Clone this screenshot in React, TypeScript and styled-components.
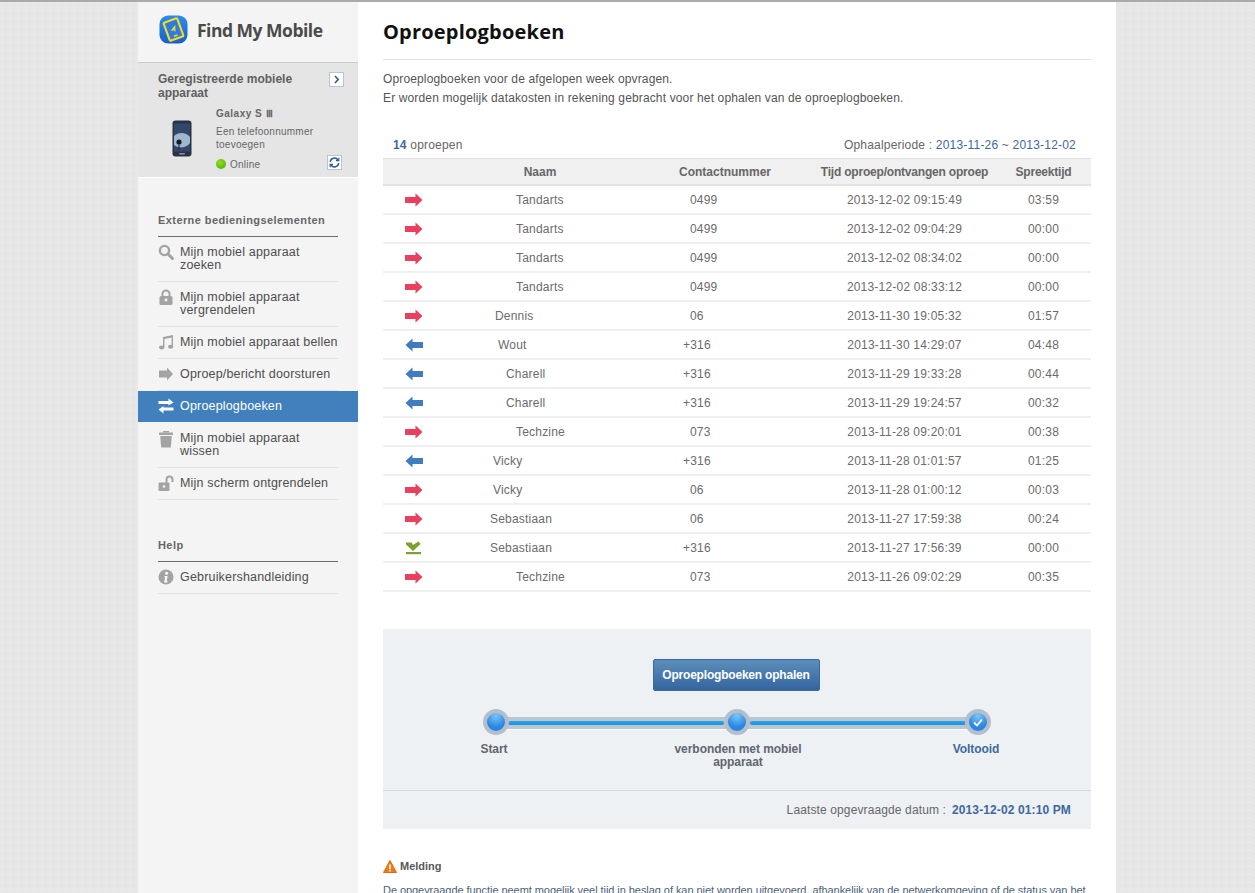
import React from "react";
import styled, { createGlobalStyle } from "styled-components";

const Global = createGlobalStyle`
  html, body { margin: 0; padding: 0; height: 100%; overflow: hidden; }
  body {
    font-family: "Liberation Sans", Arial, sans-serif;
    color: #555;
    background-color: #e7e7e7;
    background-image:
      radial-gradient(circle at 2px 2px, #ececec 1.2px, transparent 1.6px),
      radial-gradient(circle at 6px 6px, #e3e3e3 1.2px, transparent 1.6px);
    background-size: 8px 8px;
  }
  #root { height: 100%; }
`;

const Page = styled.div`
  height: 100%;
  border-top: 2px solid #aaaaaa;
  box-sizing: border-box;
`;
const Wrapper = styled.div`
  width: 978px;
  margin-left: 138px;
  display: flex;
  min-height: 1100px;
`;
const Sidebar = styled.aside`
  width: 220px;
  flex: none;
  background: #f4f4f4;
`;
const LogoBar = styled.div`
  display: flex;
  align-items: flex-start;
  gap: 9px;
  padding: 13px 0 0 21px;
  box-sizing: border-box;
  border-bottom: 1px solid #c8ccd0;
  height: 61px;
`;
const LogoText = styled.div`
  font-family: "Open Sans", sans-serif;
  font-weight: 700;
  font-size: 17.5px;
  line-height: 30px;
  color: #4a4a4a;
  letter-spacing: -0.5px;
`;
const DevicePanel = styled.section`
  height: 115px;
  box-sizing: border-box;
  background: #e5e5e5;
  padding: 9px 14px 0 20px;
  border-bottom: 1px solid #fff;
`;
const DeviceHead = styled.div`
  display: flex;
  justify-content: space-between;
  align-items: flex-start;
`;
const DeviceTitle = styled.h2`
  margin: 0;
  font-size: 12px;
  line-height: 14px;
  font-weight: 700;
  color: #5f5f5f;
  width: 160px;
`;
const SquareBtn = styled.span`
  width: 13px;
  height: 13px;
  background: #fff;
  border: 1px solid #b9c4cf;
  display: flex;
  align-items: center;
  justify-content: center;
  flex: none;
`;
const DeviceBody = styled.div`
  display: flex;
  margin-top: 7px;
`;
const PhoneSlot = styled.div`
  width: 58px;
  flex: none;
  padding: 13px 0 0 14px;
  box-sizing: border-box;
`;
const DeviceInfo = styled.div`
  flex: 1;
  font-size: 10px;
  color: #666;
  line-height: 13px;
  letter-spacing: 0.25px;
`;
const DeviceName = styled.div`
  font-weight: 700;
  font-size: 10px;
  line-height: 14px;
  color: #666;
  margin-bottom: 4px;
  letter-spacing: 0.5px;
`;
const StatusRow = styled.div`
  display: flex;
  align-items: center;
  margin-top: 6px;
  height: 14px;
  gap: 4px;
`;
const Dot = styled.span`
  width: 10px;
  height: 10px;
  border-radius: 50%;
  background: radial-gradient(circle at 40% 35%, #8fe020, #46a800);
`;
const RefreshSlot = styled.span`
  margin-left: auto;
  margin-right: 2px;
  margin-top: -3px;
`;
const NavSection = styled.nav<{ $top: number }>`
  padding: ${(p) => p.$top}px 20px 0 20px;
`;
const NavHeading = styled.h3`
  margin: 0;
  font-size: 11px;
  line-height: 13px;
  font-weight: 700;
  color: #666;
  letter-spacing: 0.42px;
  padding-bottom: 9px;
  border-bottom: 1px solid #6e6e6e;
`;
const NavList = styled.ul`
  list-style: none;
  margin: 0 -20px;
  padding: 0;
`;
const NavItem = styled.li<{ $active?: boolean; $h: number; $pad?: number }>`
  height: ${(p) => p.$h}px;
  box-sizing: border-box;
  display: flex;
  gap: 6px;
  padding: ${(p) => p.$pad ?? 9}px 20px 0;
  font-size: 12.5px;
  line-height: 13px;
  letter-spacing: 0.18px;
  color: ${(p) => (p.$active ? "#fff" : "#4e4e4e")};
  background: ${(p) => (p.$active ? "#4180bd" : "transparent")};
  position: relative;
  &::after {
    content: "";
    position: absolute;
    left: 20px;
    right: 20px;
    bottom: 0;
    height: 1px;
    background: ${(p) => (p.$active ? "transparent" : "#e0e2e5")};
  }
`;
const NavIcon = styled.span`
  width: 16px;
  height: 16px;
  flex: none;
  margin-top: -2px;
`;
const Main = styled.main`
  flex: 1;
  background: #fff;
  padding: 0 25px;
`;
const Title = styled.h1`
  margin: 0;
  height: 58px;
  box-sizing: border-box;
  padding-top: 16px;
  font-family: "Open Sans", sans-serif;
  font-size: 20px;
  line-height: 27px;
  font-weight: 700;
  color: #111;
  letter-spacing: 0.2px;
  border-bottom: 1px solid #e0e0e0;
`;
const Intro = styled.p`
  margin: 10px 0 0;
  font-size: 12px;
  line-height: 19px;
  letter-spacing: 0.14px;
  color: #555;
`;
const SummaryRow = styled.div`
  display: flex;
  justify-content: space-between;
  margin-top: 23px;
  padding: 0 15px 0 10px;
  font-size: 12px;
  letter-spacing: 0.2px;
  line-height: 29px;
  height: 27px;
  color: #666;
`;
const Count = styled.b`
  color: #3f68a0;
`;
const Period = styled.span`
  color: #3f68a0;
`;
const CallTable = styled.table`
  width: 708px;
  border-collapse: separate;
  border-spacing: 0;
  table-layout: fixed;
  font-size: 12px;
`;
const HeadCell = styled.th<{ $tight?: boolean }>`
  height: 25px;
  background: #f0f0f0;
  border-top: 1px solid #e2e2e2;
  border-bottom: 2px solid #e2e2e2;
  font-weight: 700;
  color: #666;
  text-align: center;
  padding: 0;
  letter-spacing: ${(p) => (p.$tight ? "-0.2px" : "0")};
`;
const BodyCell = styled.td`
  height: 27px;
  border-bottom: 2px solid #efefef;
  color: #6b6b6b;
  letter-spacing: 0.2px;
`;
const IconCell = styled(BodyCell)`
  padding: 0 0 0 22px;
  line-height: 0;
`;
const OffsetCell = styled(BodyCell)<{ $x: number }>`
  padding: 0 0 0 ${(p) => p.$x}px;
  white-space: nowrap;
`;
const CenterCell = styled(BodyCell)`
  text-align: center;
  padding: 0;
`;
const Panel = styled.section`
  margin-top: 37px;
  height: 200px;
  background: #eef1f4;
  display: flex;
  flex-direction: column;
`;
const PanelTop = styled.div`
  flex: none;
  height: 162px;
  box-sizing: border-box;
  padding: 30px 2px 0 0;
  border-bottom: 1px solid #d5dade;
  display: flex;
  flex-direction: column;
  align-items: center;
`;
const PrimaryButton = styled.button`
  width: 167px;
  height: 32px;
  padding: 0;
  border: 1px solid #3a6a9e;
  border-radius: 2px;
  background: linear-gradient(#5b8dbb, #34659f);
  color: #fff;
  font: 700 12px "Liberation Sans", Arial, sans-serif;
  letter-spacing: -0.2px;
`;
const Steps = styled.div`
  position: relative;
  width: 560px;
  margin-top: 18px;
  height: 60px;
`;
const Track = styled.div`
  position: absolute;
  left: 40px;
  top: 8px;
  height: 12px;
  padding: 0 12px;
  width: 458px;
  background: #b9c6d4;
  border-bottom: 1px solid #fff;
  display: flex;
  align-items: center;
  gap: 26px;
`;
const TrackFill = styled.div`
  flex: 1;
  height: 4px;
  border-radius: 2px;
  background: linear-gradient(#2ca4e4, #1e93da);
`;
const Step = styled.div<{ $left: number }>`
  position: absolute;
  left: ${(p) => p.$left}px;
  top: 0;
  width: 140px;
  margin-left: -70px;
  display: flex;
  flex-direction: column;
  align-items: center;
`;
const Knob = styled.div`
  width: 26px;
  height: 26px;
  box-sizing: border-box;
  border-radius: 50%;
  border: 4px solid #b3bfcc;
  background: radial-gradient(circle at 50% 15%, #7cc6f7, #2a86e2 65%);
  display: flex;
  align-items: center;
  justify-content: center;
  position: relative;
`;
const StepLabel = styled.div<{ $done?: boolean; $x?: number }>`
  margin-top: 8px;
  text-align: center;
  font-size: 12px;
  line-height: 13px;
  font-weight: 700;
  letter-spacing: -0.05px;
  color: ${(p) => (p.$done ? "#3f68a0" : "#5f6670")};
  transform: translateX(${(p) => p.$x ?? 0}px);
`;
const PanelFoot = styled.div`
  flex: 1;
  display: flex;
  justify-content: flex-end;
  align-items: center;
  padding-right: 20px;
  gap: 6px;
  font-size: 12px;
  letter-spacing: 0.12px;
  color: #666;
`;
const FootDate = styled.b`
  color: #3f68a0;
`;
const NoticeTitle = styled.h4`
  margin: 30px 0 0;
  display: flex;
  align-items: center;
  gap: 3px;
  font-size: 11px;
  line-height: 15px;
  font-weight: 700;
  color: #595959;
`;
const NoticeText = styled.p`
  margin: 9px 0 0;
  font-size: 11px;
  line-height: 14px;
  letter-spacing: -0.06px;
  color: #4b5f7a;
  white-space: nowrap;
`;

const Gray = "#a3a3a3";

const LogoIcon = () => (
  <svg width="29" height="29" viewBox="0 0 30 30">
    <defs>
      <linearGradient id="lg" x1="0" y1="0" x2="0" y2="1">
        <stop offset="0" stopColor="#2a8cf0" />
        <stop offset="1" stopColor="#1a5fc8" />
      </linearGradient>
    </defs>
    <rect x="0.5" y="0.5" width="29" height="29" rx="9" fill="url(#lg)" />
    <g transform="rotate(-20 15 15)">
      <rect x="7.5" y="5" width="15" height="20" rx="1.5" fill="#2f7be0" stroke="#f5dc22" strokeWidth="2.2" />
      <path d="M11.5 15.5l7-4.5-2.5 7-1-2.2z" fill="#f5dc22" />
      <rect x="13" y="21" width="4" height="1.6" fill="#f5dc22" />
    </g>
  </svg>
);

const PhoneIcon = () => (
  <svg width="20" height="37" viewBox="0 0 20 37">
    <rect x="0.5" y="0.5" width="19" height="36" rx="3" fill="#2a3346" />
    <rect x="2" y="3.5" width="16" height="28" fill="#33476a" />
    <path d="M2 16c4-4 12-4 16 1v6c-3 5-12 6-16 2z" fill="#9fb6cf" />
    <circle cx="7" cy="22" r="2.6" fill="#121a28" />
    <path d="M7 24.5v5" stroke="#121a28" strokeWidth="1" />
    <rect x="7" y="33" width="6" height="1.5" rx="0.7" fill="#8b93a3" />
  </svg>
);

const Chevron = () => (
  <svg width="9" height="9" viewBox="0 0 9 9">
    <path d="M3 1l3.2 3.5L3 8" fill="none" stroke="#2b5c95" strokeWidth="1.6" />
  </svg>
);

const Refresh = () => (
  <svg width="11" height="11" viewBox="0 0 11 11" fill="none" stroke="#2b5c95" strokeWidth="1.5">
    <path d="M1.3 5A4.2 4.2 0 0 1 9 3" />
    <path d="M9.7 6A4.2 4.2 0 0 1 2 8" />
    <path d="M9.8 0.8V3.6H7" strokeWidth="1.2" />
    <path d="M1.2 10.2V7.4H4" strokeWidth="1.2" />
  </svg>
);

const SearchI = () => (
  <svg width="16" height="16" viewBox="0 0 16 16" fill="none" stroke={Gray} strokeWidth="2.4">
    <circle cx="6.5" cy="6.5" r="4.6" />
    <path d="M10 10l4.5 4.5" strokeLinecap="round" strokeWidth="3" />
  </svg>
);
const LockI = () => (
  <svg width="16" height="16" viewBox="0 0 16 16">
    <path d="M4.5 8V5a3.5 3.5 0 0 1 7 0v3" fill="none" stroke={Gray} strokeWidth="2" />
    <rect x="1.5" y="7" width="13" height="9" rx="1.5" fill={Gray} />
    <circle cx="8" cy="11" r="1.4" fill="#f4f4f4" />
  </svg>
);
const MusicI = () => (
  <svg width="16" height="16" viewBox="0 0 16 16" fill={Gray}>
    <path d="M5 3l10-2v2.3L6.4 5V14H5zM13.6 3h1.4v10h-1.4z" />
    <ellipse cx="3.6" cy="13.6" rx="2.6" ry="2" />
    <ellipse cx="12.6" cy="12.8" rx="2.6" ry="2" />
  </svg>
);
const ForwardI = () => (
  <svg width="16" height="16" viewBox="0 0 16 16" fill={Gray}>
    <path d="M1 4.5h8V1.5L15 8l-6 6.5V11.5H1z" />
  </svg>
);
const SwapI = () => (
  <svg width="16" height="16" viewBox="0 0 16 16" fill="#fff">
    <path d="M0.5 3h10V0.5L15.5 4.5 10.5 7.5V6H0.5z" />
    <path d="M15.5 9.5h-10V8L0.5 11.5l5 4V12.5h10z" />
  </svg>
);
const TrashI = () => (
  <svg width="16" height="18" viewBox="0 0 16 18" fill={Gray}>
    <path d="M1 2.5h14V5H1z" />
    <path d="M5 1h6v1.5H5z" />
    <path d="M2.2 6h11.6l-1 11.5H3.2z" />
  </svg>
);
const UnlockI = () => (
  <svg width="16" height="16" viewBox="0 0 16 16">
    <path d="M8.5 8V4.5a3 3 0 0 1 6 0V7" fill="none" stroke={Gray} strokeWidth="2" />
    <rect x="0.5" y="7.5" width="11" height="8.5" rx="1.2" fill={Gray} />
    <circle cx="6" cy="11.5" r="1.3" fill="#f4f4f4" />
  </svg>
);
const InfoI = () => (
  <svg width="16" height="16" viewBox="0 0 16 16">
    <circle cx="8" cy="8" r="7.5" fill={Gray} />
    <circle cx="8.6" cy="4.3" r="1.5" fill="#fff" />
    <path d="M6.6 7h3l-1 5.2h1L9.4 13.4H6.2l1-5.2h-.8z" fill="#fff" />
  </svg>
);

type CallKind = "out" | "in" | "ok";

const OutArrow = () => (
  <svg width="18" height="14" viewBox="0 0 18 14" fill="#e9405f">
    <path d="M0 4h10.5V0.5L17.5 7l-7 6.5V10H0z" />
  </svg>
);
const InArrow = () => (
  <svg width="18" height="14" viewBox="0 0 18 14" fill="#3f7dc0">
    <path d="M18 4H7.5V0.5L0.5 7l7 6.5V10H18z" />
  </svg>
);
const OkArrow = () => (
  <svg width="18" height="14" viewBox="0 0 18 14">
    <path d="M1 1.5h5.5L8 4l5.5-3.5 2 2.5L8 10 1 3.5z" fill="#7ea02d" />
    <rect x="1" y="11" width="15" height="2.2" fill="#7ea02d" />
  </svg>
);

const calls: { k: CallKind; name: string; nx: number; num: string; nux: number; t: string; d: string }[] = [
  { k: "out", name: "Tandarts", nx: 73, num: "0499", nux: 53, t: "2013-12-02 09:15:49", d: "03:59" },
  { k: "out", name: "Tandarts", nx: 73, num: "0499", nux: 53, t: "2013-12-02 09:04:29", d: "00:00" },
  { k: "out", name: "Tandarts", nx: 73, num: "0499", nux: 53, t: "2013-12-02 08:34:02", d: "00:00" },
  { k: "out", name: "Tandarts", nx: 73, num: "0499", nux: 53, t: "2013-12-02 08:33:12", d: "00:00" },
  { k: "out", name: "Dennis", nx: 52, num: "06", nux: 53, t: "2013-11-30 19:05:32", d: "01:57" },
  { k: "in", name: "Wout", nx: 55, num: "+316", nux: 46, t: "2013-11-30 14:29:07", d: "04:48" },
  { k: "in", name: "Charell", nx: 63, num: "+316", nux: 46, t: "2013-11-29 19:33:28", d: "00:44" },
  { k: "in", name: "Charell", nx: 63, num: "+316", nux: 46, t: "2013-11-29 19:24:57", d: "00:32" },
  { k: "out", name: "Techzine", nx: 73, num: "073", nux: 53, t: "2013-11-28 09:20:01", d: "00:38" },
  { k: "in", name: "Vicky", nx: 50, num: "+316", nux: 46, t: "2013-11-28 01:01:57", d: "01:25" },
  { k: "out", name: "Vicky", nx: 50, num: "06", nux: 53, t: "2013-11-28 01:00:12", d: "00:03" },
  { k: "out", name: "Sebastiaan", nx: 47, num: "06", nux: 53, t: "2013-11-27 17:59:38", d: "00:24" },
  { k: "ok", name: "Sebastiaan", nx: 47, num: "+316", nux: 46, t: "2013-11-27 17:56:39", d: "00:00" },
  { k: "out", name: "Techzine", nx: 73, num: "073", nux: 53, t: "2013-11-26 09:02:29", d: "00:35" },
];

const kindIcon = { out: <OutArrow />, in: <InArrow />, ok: <OkArrow /> };

export default function App() {
  return (
    <Page>
      <Global />
      <Wrapper>
        <Sidebar>
          <LogoBar>
            <LogoIcon />
            <LogoText>Find My Mobile</LogoText>
          </LogoBar>
          <DevicePanel>
            <DeviceHead>
              <DeviceTitle>Geregistreerde mobiele apparaat</DeviceTitle>
              <SquareBtn><Chevron /></SquareBtn>
            </DeviceHead>
            <DeviceBody>
              <PhoneSlot><PhoneIcon /></PhoneSlot>
              <DeviceInfo>
                <DeviceName>Galaxy S Ⅲ</DeviceName>
                Een telefoonnummer
                <br />
                toevoegen
                <StatusRow>
                  <Dot />
                  Online
                  <RefreshSlot>
                    <SquareBtn><Refresh /></SquareBtn>
                  </RefreshSlot>
                </StatusRow>
              </DeviceInfo>
            </DeviceBody>
          </DevicePanel>
          <NavSection $top={36}>
            <NavHeading>Externe bedieningselementen</NavHeading>
            <NavList>
              <NavItem $h={45}><NavIcon><SearchI /></NavIcon><span>Mijn mobiel apparaat<br />zoeken</span></NavItem>
              <NavItem $h={45}><NavIcon><LockI /></NavIcon><span>Mijn mobiel apparaat<br />vergrendelen</span></NavItem>
              <NavItem $h={32}><NavIcon><MusicI /></NavIcon><span>Mijn mobiel apparaat bellen</span></NavItem>
              <NavItem $h={32}><NavIcon><ForwardI /></NavIcon><span>Oproep/bericht doorsturen</span></NavItem>
              <NavItem $h={31} $active><NavIcon><SwapI /></NavIcon><span>Oproeplogboeken</span></NavItem>
              <NavItem $h={46} $pad={10}><NavIcon><TrashI /></NavIcon><span>Mijn mobiel apparaat<br />wissen</span></NavItem>
              <NavItem $h={32}><NavIcon><UnlockI /></NavIcon><span>Mijn scherm ontgrendelen</span></NavItem>
            </NavList>
          </NavSection>
          <NavSection $top={39}>
            <NavHeading>Help</NavHeading>
            <NavList>
              <NavItem $h={32}><NavIcon><InfoI /></NavIcon><span>Gebruikershandleiding</span></NavItem>
            </NavList>
          </NavSection>
        </Sidebar>
        <Main>
          <Title>Oproeplogboeken</Title>
          <Intro>
            Oproeplogboeken voor de afgelopen week opvragen.
            <br />
            Er worden mogelijk datakosten in rekening gebracht voor het ophalen van de oproeplogboeken.
          </Intro>
          <SummaryRow>
            <span><Count>14</Count> oproepen</span>
            <span>Ophaalperiode : <Period>2013-11-26 ~ 2013-12-02</Period></span>
          </SummaryRow>
          <CallTable>
            <colgroup>
              <col width="60" />
              <col width="194" />
              <col width="176" />
              <col width="183" />
              <col width="95" />
            </colgroup>
            <thead>
              <tr>
                <HeadCell />
                <HeadCell>Naam</HeadCell>
                <HeadCell>Contactnummer</HeadCell>
                <HeadCell $tight>Tijd oproep/ontvangen oproep</HeadCell>
                <HeadCell $tight>Spreektijd</HeadCell>
              </tr>
            </thead>
            <tbody>
              {calls.map((c, i) => (
                <tr key={i}>
                  <IconCell>{kindIcon[c.k]}</IconCell>
                  <OffsetCell $x={c.nx}>{c.name}</OffsetCell>
                  <OffsetCell $x={c.nux}>{c.num}</OffsetCell>
                  <CenterCell>{c.t}</CenterCell>
                  <CenterCell>{c.d}</CenterCell>
                </tr>
              ))}
            </tbody>
          </CallTable>
          <Panel>
            <PanelTop>
              <PrimaryButton>Oproeplogboeken ophalen</PrimaryButton>
              <Steps>
                <Track>
                  <TrackFill />
                  <TrackFill />
                </Track>
                <Step $left={40}>
                  <Knob />
                  <StepLabel $x={-2}>Start</StepLabel>
                </Step>
                <Step $left={281}>
                  <Knob />
                  <StepLabel $x={1}>verbonden met mobiel<br />apparaat</StepLabel>
                </Step>
                <Step $left={522}>
                  <Knob>
                    <svg width="12" height="12" viewBox="0 0 12 12">
                      <path d="M2 6.5l3 3 5-6" fill="none" stroke="#fff" strokeWidth="1.8" />
                    </svg>
                  </Knob>
                  <StepLabel $done $x={-2}>Voltooid</StepLabel>
                </Step>
              </Steps>
            </PanelTop>
            <PanelFoot>
              Laatste opgevraagde datum :
              <FootDate>2013-12-02 01:10 PM</FootDate>
            </PanelFoot>
          </Panel>
          <NoticeTitle>
            <svg width="14" height="13" viewBox="0 0 14 13">
              <path d="M7 .5L13.5 12.5H.5z" fill="#f07a1a" stroke="#e06a10" strokeLinejoin="round" />
              <rect x="6.2" y="4.5" width="1.6" height="4.5" fill="#fff" />
              <rect x="6.2" y="9.8" width="1.6" height="1.6" fill="#fff" />
            </svg>
            Melding
          </NoticeTitle>
          <NoticeText>
            De opgevraagde functie neemt mogelijk veel tijd in beslag of kan niet worden uitgevoerd, afhankelijk van de netwerkomgeving of de status van het
          </NoticeText>
        </Main>
      </Wrapper>
    </Page>
  );
}
